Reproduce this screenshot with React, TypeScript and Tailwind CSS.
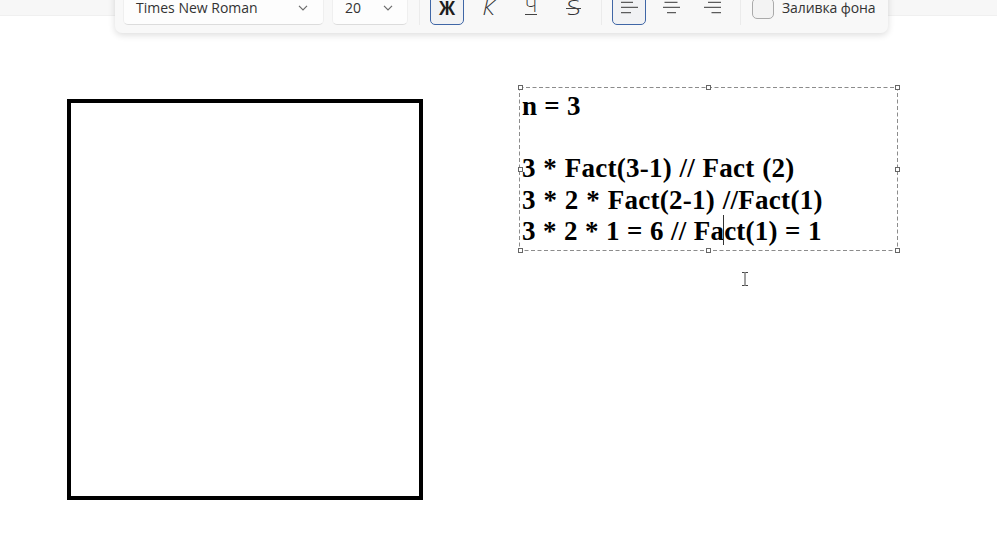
import type { ReactNode } from 'react';

function Chevron() {
  return (
    <svg className="mt-[-1px]" width="10" height="6" viewBox="0 0 10 6" fill="none" stroke="#6b6b6b" strokeWidth="1.2">
      <path d="M1 0.8 L5 4.8 L9 0.8" />
    </svg>
  );
}

function Select({ label, className }: { label: string; className: string }) {
  return (
    <div className={`flex h-[34px] items-center justify-between rounded-[5px] border border-[#efefef] border-b-[#dcdcdc] bg-[#fdfdfd] leading-4 ${className}`}>
      <span className="whitespace-nowrap text-[#333]">{label}</span>
      <Chevron />
    </div>
  );
}

function Tool({ active, children }: { active?: boolean; children: ReactNode }) {
  return (
    <div className={`flex h-[34px] w-[34px] shrink-0 items-center justify-center rounded-[5px] border ${active ? 'border-[#3f66a6] bg-[#f1f2f4]' : 'border-transparent'}`}>
      {children}
    </div>
  );
}

function Lines({ d }: { d: string }) {
  return (
    <svg width="18" height="18" viewBox="0 0 18 18" stroke="#5c5c5c" strokeWidth="1.3" fill="none">
      <path d={d} />
    </svg>
  );
}

function Divider({ className }: { className: string }) {
  return <div className={`h-[34px] w-px shrink-0 bg-[#ebebeb] ${className}`} />;
}

function Toolbar() {
  return (
    <div className="absolute left-[115px] top-[-20px] flex h-[53px] w-[773px] items-start rounded-[7px] bg-[#f8f8f8] pl-2 pt-[11px] font-['Open_Sans','Noto_Sans',sans-serif] text-[14px] shadow-[0_2px_7px_rgba(0,0,0,0.14)]">
      <Select label="Times New Roman" className="w-[201px] pl-3 pr-[15px]" />
      <Select label="20" className="ml-2 w-[76px] pl-3 pr-[14px]" />
      <Divider className="ml-[11px]" />
      <div className="ml-[10px] flex gap-[8px]">
        <Tool active><span className="scale-x-[0.9] text-[19px] font-bold leading-none text-[#1c1c1c]">Ж</span></Tool>
        <Tool><span className="scale-x-110 text-[20px] font-light italic leading-none text-[#333]">К</span></Tool>
        <Tool>
          <span className="mt-[-5px] border-b border-[#444] text-[18px] font-light leading-[18px] text-[#333]">Ч</span>
        </Tool>
        <Tool>
          <span className="relative flex w-[15px] justify-center text-[20px] font-light leading-none text-[#333]">
            <span className="scale-x-125">S</span>
            <span className="absolute left-0 top-[10px] h-px w-[15px] bg-[#444]" />
          </span>
        </Tool>
      </div>
      <Divider className="ml-[11px]" />
      <div className="ml-[10px] flex gap-[8px]">
        <Tool active><Lines d="M1 3.4H13 M1 8.4H18 M1 13.6H11" /></Tool>
        <Tool><Lines d="M2.5 3.4H15.5 M1 8.4H18 M5 13.6H14" /></Tool>
        <Tool><Lines d="M4 3.4H17 M0 8.4H17 M7.5 13.6H17" /></Tool>
      </div>
      <Divider className="ml-[10px]" />
      <div className="ml-[11px] flex h-[34px] items-center leading-4">
        <div className="h-[21px] w-[22px] rounded-[5px] border border-[#aaa] bg-[#f3f3f3]" />
        <span className="ml-2 mt-[-1px] whitespace-nowrap tracking-[-0.1px] text-[#333]">Заливка фона</span>
      </div>
    </div>
  );
}

const handles = [
  'left-[-1px] top-[-2px]', 'left-[187px] top-[-2px]', 'right-[-2px] top-[-2px]',
  'left-[-1px] top-[80px]', 'right-[-2px] top-[80px]',
  'left-[-1px] bottom-[-2px]', 'left-[187px] bottom-[-2px]', 'right-[-2px] bottom-[-2px]',
];

function TextBox() {
  return (
    <div className="absolute left-[519px] top-[87px] h-[164px] w-[379px] pl-[3px] pt-[4px] font-['Liberation_Serif','Times_New_Roman',serif] text-[27px] font-bold leading-[31.2px] text-black">
      <svg className="absolute inset-0" width="379" height="164" fill="none">
        <rect x="0.5" y="0.5" width="378" height="163" stroke="#8c8c8c" strokeDasharray="4 2.5" />
      </svg>
      <div className="whitespace-nowrap">
        <div className="tracking-[0.25px]">n = 3</div>
        <div>&nbsp;</div>
        <div className="tracking-[0.25px] [word-spacing:0.6px]">3 * Fact(3-1) // Fact (2)</div>
        <div className="tracking-[0.28px] [word-spacing:0.6px]">3 * 2 * Fact(2-1) //Fact(1)</div>
        <div className="tracking-[0.23px] [word-spacing:0.3px]">
          <span>3 * 2 * 1 = 6 // Fa</span>
          <span className="relative"><span className="absolute left-[-1px] top-[-1px] h-[30px] w-px bg-[#333]" />ct(1) = 1</span>
        </div>
      </div>
      {handles.map((place) => (
        <span key={place} className={`absolute h-[5px] w-[5px] border border-[#666] bg-white ${place}`} />
      ))}
    </div>
  );
}

export default function App() {
  return (
    <main className="relative h-[557px] w-[997px] overflow-hidden bg-white">
      <div className="h-4 border-b border-[#f0f0f0] bg-[#f7f7f7]" />
      <div className="absolute left-[67px] top-[99px] h-[401px] w-[356px] border-4 border-black" />
      <TextBox />
      <Toolbar />
      <svg className="absolute left-[741px] top-[272px]" width="8" height="14" fill="none" stroke="#444">
        <path d="M1 0.5H3.5L4 1L4.5 0.5H7 M4 1V13 M1 13.5H3.5L4 13L4.5 13.5H7" />
      </svg>
    </main>
  );
}
